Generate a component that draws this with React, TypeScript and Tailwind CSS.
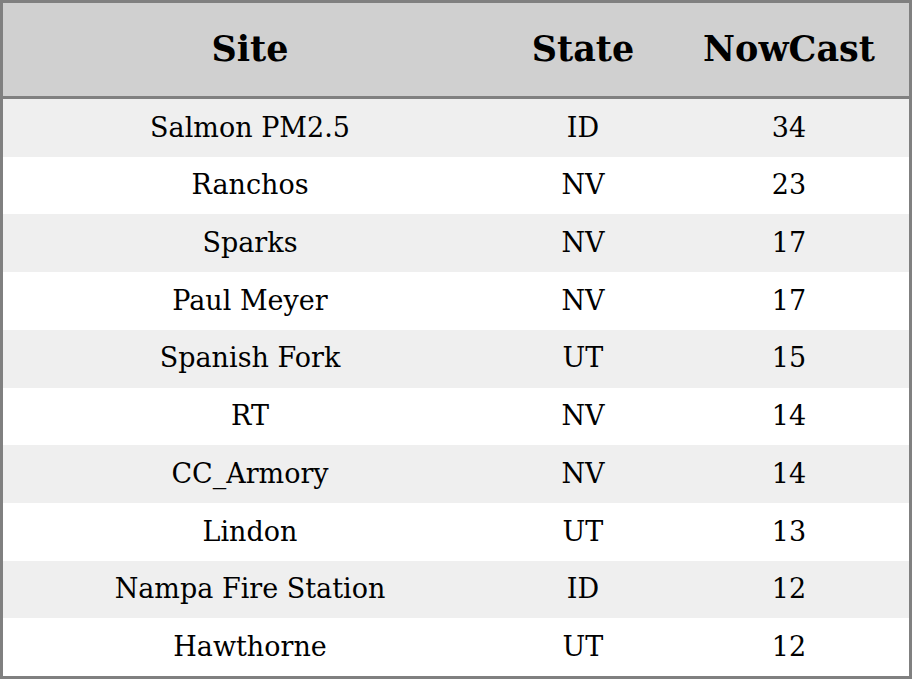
const rows = [
  ["Salmon PM2.5", "ID", "34"],
  ["Ranchos", "NV", "23"],
  ["Sparks", "NV", "17"],
  ["Paul Meyer", "NV", "17"],
  ["Spanish Fork", "UT", "15"],
  ["RT", "NV", "14"],
  ["CC_Armory", "NV", "14"],
  ["Lindon", "UT", "13"],
  ["Nampa Fire Station", "ID", "12"],
  ["Hawthorne", "UT", "12"],
];

export default function App() {
  return (
    <div className="w-[912px] h-[679px] border-[3px] border-[#808080] bg-white flex flex-col text-black font-['DejaVu_Serif',serif]">
      <div className="h-[96px] flex items-center bg-[#d0d0d0] border-b-[3px] border-[#808080] text-[35px] font-bold">
        <div className="w-[494px] text-center">Site</div>
        <div className="w-[172px] text-center">State</div>
        <div className="flex-1 text-center">NowCast</div>
      </div>
      {rows.map((r, i) => (
        <div
          key={i}
          className={`flex-1 flex items-center text-[27px] ${
            i % 2 === 0 ? "bg-[#efefef]" : "bg-white"
          }`}
        >
          <div className="w-[494px] text-center">{r[0]}</div>
          <div className="w-[172px] text-center">{r[1]}</div>
          <div className="flex-1 text-center">{r[2]}</div>
        </div>
      ))}
    </div>
  );
}
